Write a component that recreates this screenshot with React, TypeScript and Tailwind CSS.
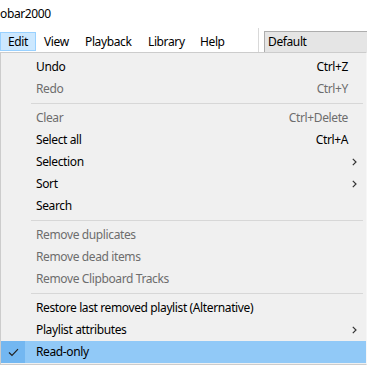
import React from "react";

type Item =
  | { sep: true }
  | {
      sep?: false;
      label: string;
      shortcut?: string;
      disabled?: boolean;
      submenu?: boolean;
      checked?: boolean;
      active?: boolean;
    };

const items: Item[] = [
  { label: "Undo", shortcut: "Ctrl+Z" },
  { label: "Redo", shortcut: "Ctrl+Y", disabled: true },
  { sep: true },
  { label: "Clear", shortcut: "Ctrl+Delete", disabled: true },
  { label: "Select all", shortcut: "Ctrl+A" },
  { label: "Selection", submenu: true },
  { label: "Sort", submenu: true },
  { label: "Search" },
  { sep: true },
  { label: "Remove duplicates", disabled: true },
  { label: "Remove dead items", disabled: true },
  { label: "Remove Clipboard Tracks", disabled: true },
  { sep: true },
  { label: "Restore last removed playlist (Alternative)" },
  { label: "Playlist attributes", submenu: true },
  { label: "Read-only", checked: true, active: true },
];

const Chevron = () => (
  <svg width="5" height="8" viewBox="0 0 5 8" className="block">
    <path d="M0.8 0.8 L4 4 L0.8 7.2" fill="none" stroke="#333" strokeWidth="1.2" />
  </svg>
);

const Check = () => (
  <svg width="11" height="9" viewBox="0 0 11 9" className="block">
    <path d="M1 4.5 L4 7.5 L10 1.2" fill="none" stroke="#222" strokeWidth="1.2" />
  </svg>
);

const MenuRow: React.FC<{ item: Exclude<Item, { sep: true }> }> = ({ item }) => {
  const color = item.disabled ? "text-[#6d6d6d]" : "text-black";
  return (
    <div
      className={`flex h-[22px] items-center ${item.active ? "bg-[#91c9f7]" : ""} ${color}`}
    >
      <div
        className={`flex h-full w-[24px] items-center justify-center ${item.active ? "bg-[#73b7f1]" : ""}`}
      >
        {item.checked && <Check />}
      </div>
      <div className="ml-[11px] flex-1 whitespace-nowrap">{item.label}</div>
      {item.shortcut && <div className="mr-[18px] whitespace-nowrap">{item.shortcut}</div>}
      {item.submenu && (
        <div className="mr-[9px]">
          <Chevron />
        </div>
      )}
    </div>
  );
};

export default function App() {
  return (
    <div
      className="relative h-[366px] w-[367px] overflow-hidden bg-white text-[12px] tracking-[-0.38px] text-black"
      style={{ fontFamily: '"Noto Sans", "Open Sans", sans-serif' }}
    >
      <div className="flex h-[28px] items-center pl-0 leading-none">obar2000</div>
      <div className="flex h-[24px] items-start">
        <div className="mt-[4px] flex h-[19px] w-[36px] items-center justify-center border border-[#99d1ff] bg-[#cce8ff]">
          Edit
        </div>
        <div className="ml-[8px] mt-[4px] flex h-[19px] items-center">
          <span className="w-[41px]">View</span>
          <span className="w-[63px]">Playback</span>
          <span className="w-[52px]">Library</span>
          <span className="w-[25px]">Help</span>
        </div>
        <div className="ml-[33px] h-[24px] w-px bg-[#d9d9d9]" />
        <div className="ml-[5px] mt-[3px] flex h-[21px] flex-1 items-center border-l border-t border-[#adadad] bg-[#e5e5e5] pl-[3px]">
          Default
        </div>
      </div>
      <div className="border border-[#cccccc] border-r-[#f7f7f7] bg-[#f0f0f0] pb-[1px] pt-[3px]">
        {items.map((item, i) =>
          item.sep ? (
            <div key={i} className="flex h-[7px] items-center pl-[30px] pr-[3px]">
              <div className="h-px w-full bg-[#d7d7d7]" />
            </div>
          ) : (
            <MenuRow key={i} item={item} />
          )
        )}
      </div>
    </div>
  );
}
